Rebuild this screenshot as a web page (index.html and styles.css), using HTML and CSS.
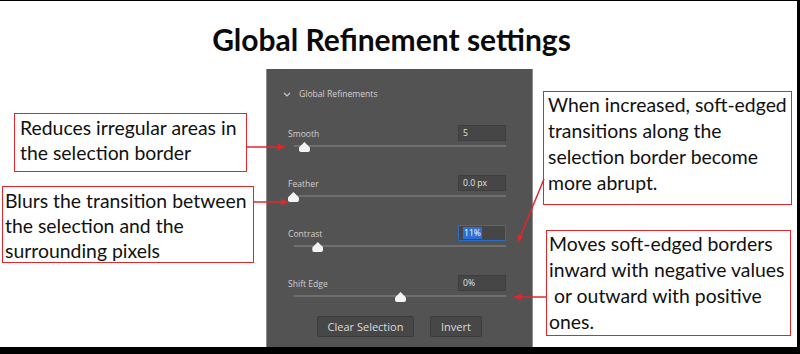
FILE: index.html
```html
<!DOCTYPE html>
<html lang="en">
  <head>
    <meta charset="UTF-8" />
    <title>Global Refinement settings</title>
    <link rel="stylesheet" href="styles.css">
  </head>
  <body>
    <div class="frame">
      <h1 class="title">Global Refinement settings</h1>

      <div class="panel">
        <div class="panel-head">
          <svg class="chevron" width="8" height="5" viewBox="0 0 8 5">
            <path d="M1 1 L4 4 L7 1" fill="none" stroke="#c8c8c8" stroke-width="1.2" />
          </svg>
          <span>Global Refinements</span>
        </div>

        <div class="rows">
          <div class="row">
            <div class="row-head">
              <span class="label">Smooth</span>
              <span class="field">5</span>
            </div>
            <div class="track"><span class="thumb" style="left: 4.7%"></span></div>
          </div>
          <div class="row">
            <div class="row-head">
              <span class="label">Feather</span>
              <span class="field">0.0 px</span>
            </div>
            <div class="track"><span class="thumb" style="left: -0.5%"></span></div>
          </div>
          <div class="row">
            <div class="row-head">
              <span class="label">Contrast</span>
              <span class="field field-active"><span class="sel">11%</span></span>
            </div>
            <div class="track"><span class="thumb" style="left: 11%"></span></div>
          </div>
          <div class="row">
            <div class="row-head">
              <span class="label">Shift Edge</span>
              <span class="field">0%</span>
            </div>
            <div class="track"><span class="thumb" style="left: 50%"></span></div>
          </div>
        </div>

        <div class="actions">
          <button class="btn btn-wide">Clear Selection</button>
          <button class="btn">Invert</button>
        </div>
      </div>

      <div class="note note-smooth">Reduces irregular areas in<br>the selection border</div>
      <div class="note note-feather">Blurs the transition between<br>the selection and the<br>surrounding pixels</div>
      <div class="note note-contrast">When increased, soft-edged<br>transitions along the<br>selection border become<br>more abrupt.</div>
      <div class="note note-shift">Moves soft-edged borders<br>inward with negative values<br>&nbsp;or outward with positive<br>ones.</div>

      <svg class="arrows" width="797" height="347" viewBox="0 0 797 347">
        <defs>
          <marker id="head" markerWidth="8" markerHeight="8" refX="7" refY="4" orient="auto" markerUnits="userSpaceOnUse">
            <path d="M0 0.8 L7 4 L0 7.2 Z" fill="#e3262b" />
          </marker>
        </defs>
        <line x1="247" y1="146" x2="285" y2="146" marker-end="url(#head)" />
        <line x1="254" y1="201" x2="288" y2="201" marker-end="url(#head)" />
        <line x1="544" y1="178" x2="518" y2="241" marker-end="url(#head)" />
        <line x1="546" y1="296" x2="514" y2="296" marker-end="url(#head)" />
      </svg>
    </div>
  </body>
</html>
```

FILE: styles.css
```css
* {
  margin: 0;
  padding: 0;
  box-sizing: border-box;
}

body {
  background-color: #000;
  width: 800px;
  height: 354px;
  overflow: hidden;
  font-family: "Lato", "Open Sans", sans-serif;
}

.frame {
  position: relative;
  width: 797px;
  height: 346px;
  margin-top: 1px;
  background-color: #fff;
  display: flex;
  flex-direction: column;
}

.title {
  height: 68px;
  padding-top: 21px;
  padding-right: 14px;
  text-align: center;
  font-size: 30px;
  font-weight: 700;
  color: #0a0a0a;
  line-height: 34px;
  white-space: nowrap;
}

/* photoshop style panel */
.panel {
  width: 267px;
  flex: 1;
  margin-left: 266px;
  background-color: #535353;
  border-left: 1px solid #8c8c8c;
  border-right: 1px solid #8c8c8c;
  padding: 19px 26px 0 15px;
  font-family: "Open Sans", "Noto Sans", sans-serif;
  color: #d2d2d2;
  font-size: 8.6px;
}

.panel-head {
  height: 12px;
  display: flex;
  align-items: center;
  gap: 8px;
  margin-bottom: 25px;
}

.chevron {
  margin-left: 1px;
}

.rows {
  display: flex;
  flex-direction: column;
  gap: 9px;
  padding-left: 6px;
}

.row {
  height: 41px;
}

.row-head {
  height: 16px;
  display: flex;
  justify-content: space-between;
  align-items: center;
}

.label {
  color: #cfcfcf;
  padding-top: 1px;
}

.field {
  width: 48px;
  height: 16px;
  background-color: #464646;
  border: 1px solid #3e3e3e;
  color: #e0e0e0;
  padding-left: 4px;
  line-height: 14px;
}

.field-active {
  border-color: #2a6bc4;
}

.sel {
  background-color: #2d6fd2;
  color: #fff;
  padding: 0 1px;
}

.track {
  position: relative;
  height: 2px;
  margin: 4px 0 0 6px;
  background-color: #6f6f6f;
}

.thumb {
  position: absolute;
  top: -3px;
  width: 11px;
  height: 10px;
  margin-left: -5px;
  background-color: #f4f4f4;
  clip-path: polygon(50% 0, 100% 55%, 100% 100%, 0 100%, 0 55%);
  border-radius: 2px;
}

.actions {
  display: flex;
  gap: 16px;
  padding-left: 35px;
}

.btn {
  height: 21px;
  width: 52px;
  background-color: #474747;
  border: 1px solid #3b3b3b;
  border-radius: 2px;
  color: #dcdcdc;
  font-family: "Open Sans", "Noto Sans", sans-serif;
  font-size: 11px;
}

.btn-wide {
  width: 97px;
}

/* annotations */
.note {
  position: absolute;
  border: 1.5px solid #e3262b;
  background-color: #fff;
  color: #111;
  font-size: 19.4px;
  line-height: 25px;
  padding: 1px 4px;
  white-space: nowrap;
}

.note-smooth {
  left: 14px;
  top: 112px;
  width: 233px;
  height: 59px;
  padding-left: 5px;
}

.note-feather {
  left: 2px;
  top: 185px;
  width: 252px;
  height: 77px;
  padding-left: 2px;
}

.note-contrast {
  left: 543px;
  top: 90px;
  width: 249px;
  height: 114px;
  line-height: 26px;
  padding: 0 4px;
}

.note-shift {
  left: 546px;
  top: 229px;
  width: 245px;
  height: 106px;
  line-height: 26px;
  padding: 0 2px;
}

.arrows {
  position: absolute;
  left: 0;
  top: 0;
  pointer-events: none;
}

.arrows line {
  stroke: #e3262b;
  stroke-width: 1.5;
}
```
